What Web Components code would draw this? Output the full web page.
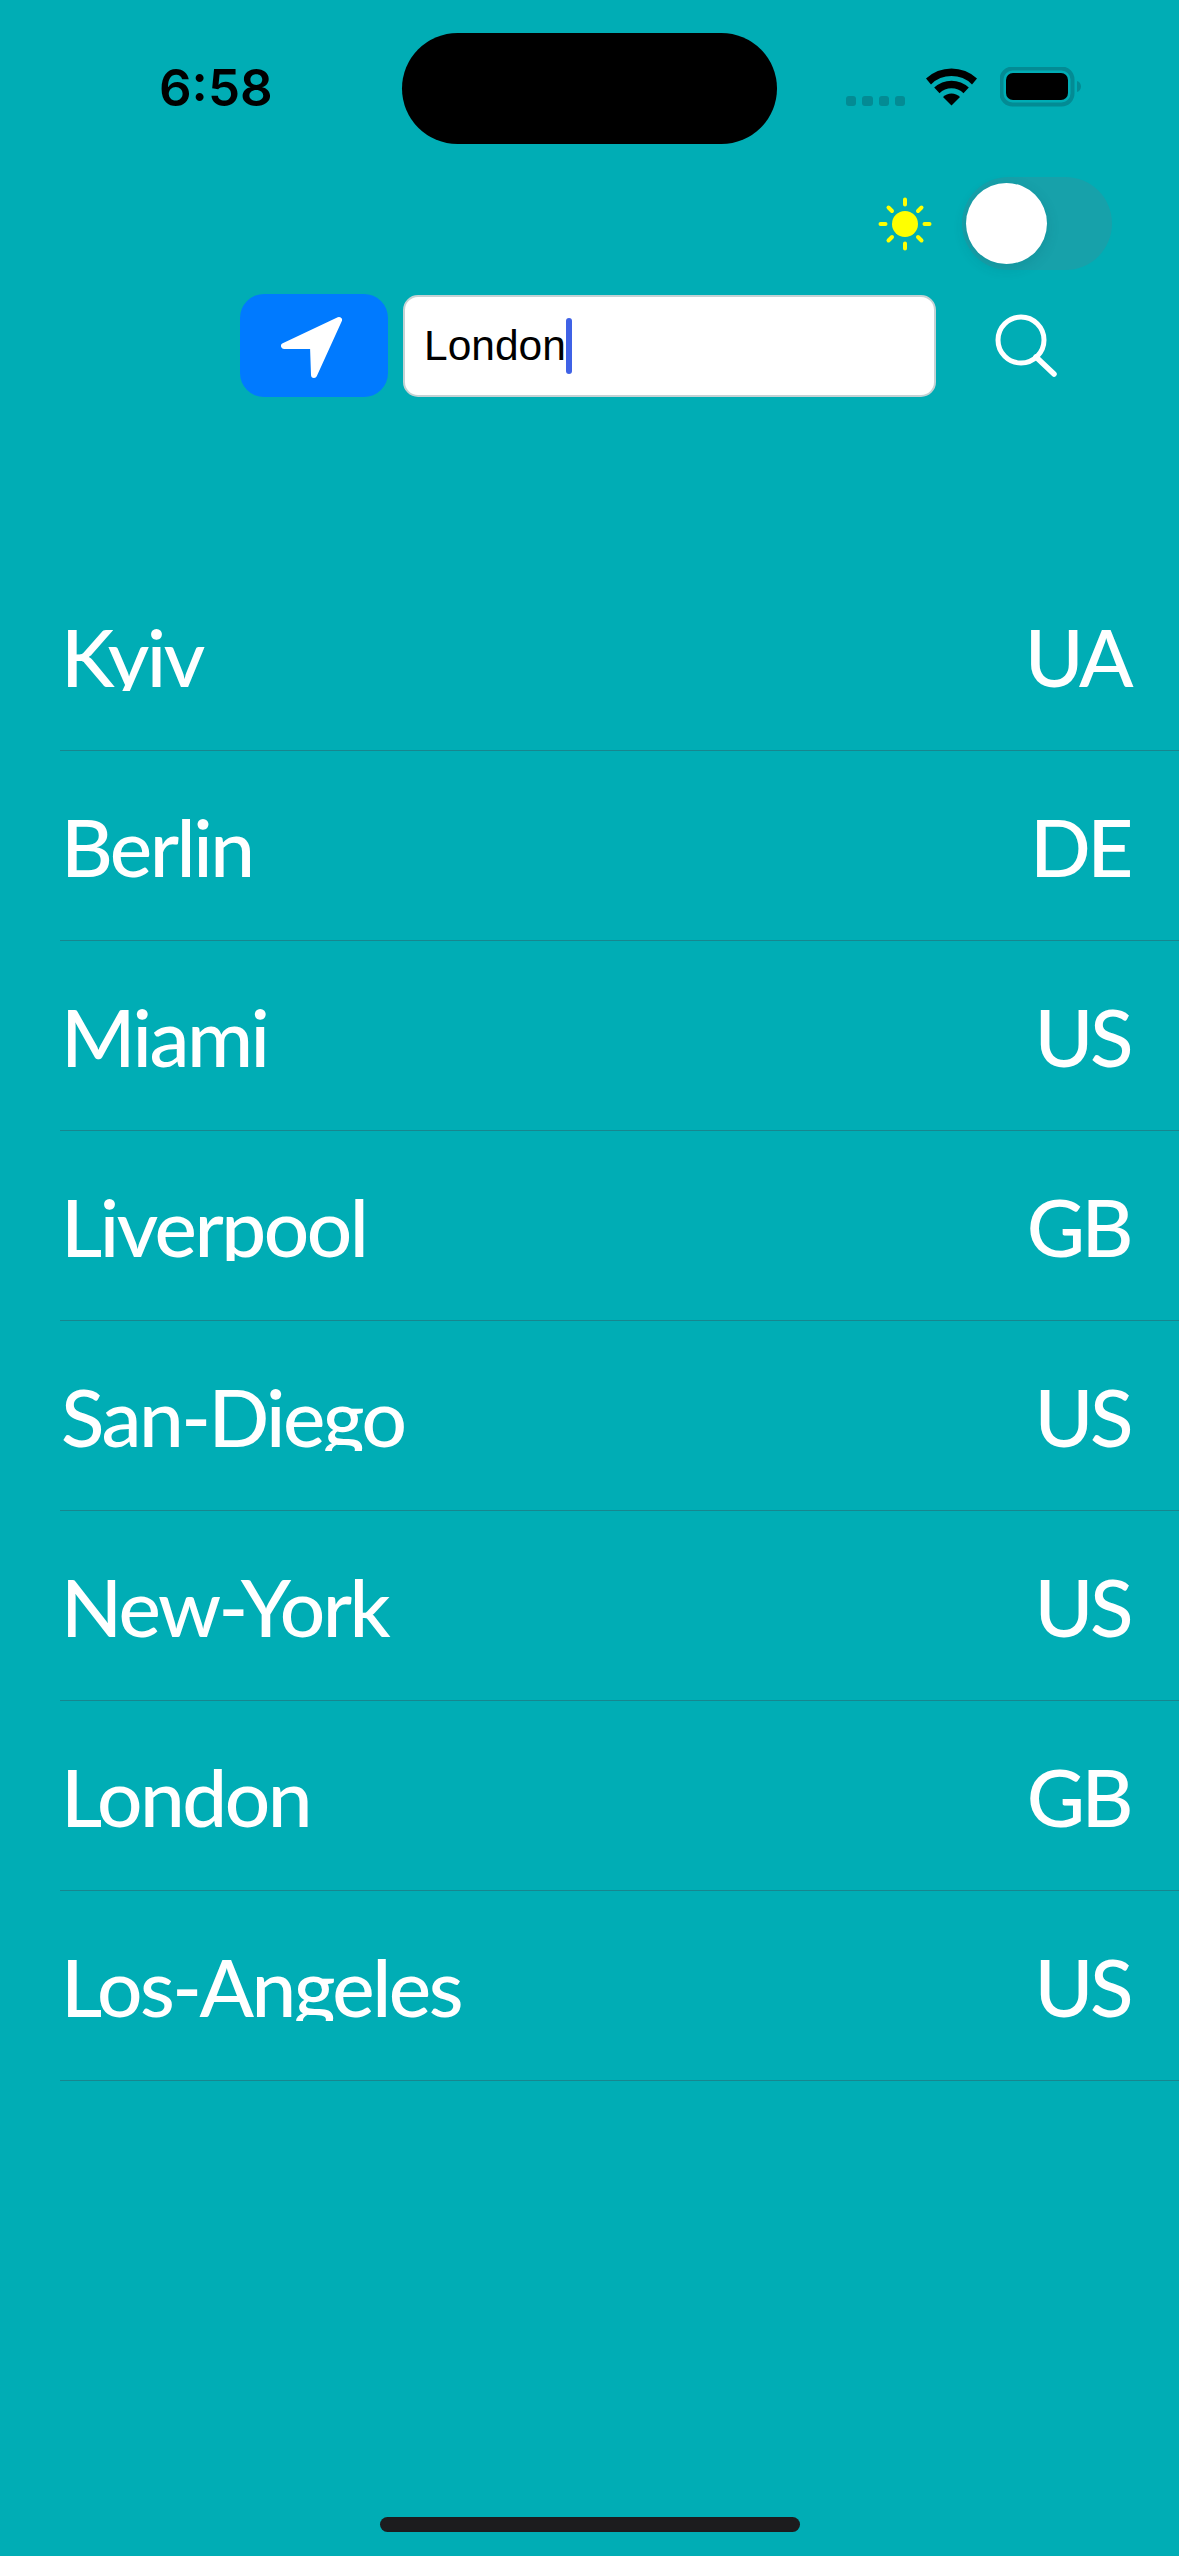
<!DOCTYPE html>
<html lang="en">
<head>
<meta charset="utf-8">
<title>Weather</title>
<style>
  html, body { margin: 0; background: #00adb5; }
  body { width: 1179px; height: 2556px; overflow: hidden; font-family: "Lato", sans-serif; }
</style>
</head>
<body>
<weather-screen>
  <status-bar time="6:58"></status-bar>
  <theme-toggle></theme-toggle>
  <search-bar value="London"></search-bar>
  <city-list>
    <city-row code="UA">Kyiv</city-row>
    <city-row code="DE">Berlin</city-row>
    <city-row code="US">Miami</city-row>
    <city-row code="GB">Liverpool</city-row>
    <city-row code="US">San-Diego</city-row>
    <city-row code="US">New-York</city-row>
    <city-row code="GB">London</city-row>
    <city-row code="US">Los-Angeles</city-row>
  </city-list>
  <home-indicator></home-indicator>
</weather-screen>

<script>
class WeatherScreen extends HTMLElement {
  constructor () {
    super()
    this.attachShadow({ mode: 'open' }).innerHTML = /*html*/`
    <style>
      :host {
        background: #00adb5;
        display: flex;
        flex-direction: column;
        height: 2556px;
        width: 1179px;
      }
    </style>
    <slot></slot>
    `
  }
}

class StatusBar extends HTMLElement {
  constructor () {
    super()
    this.attachShadow({ mode: 'open' })
  }

  connectedCallback () {
    this.shadowRoot.innerHTML = /*html*/`
    <style>
      :host {
        align-items: flex-start;
        box-sizing: border-box;
        display: flex;
        height: 144px;
        padding-top: 33px;
      }
      .time {
        color: #000;
        font: 600 51px/38px "Inter", sans-serif;
        margin: 36px 0 0 159px;
        width: 243px;
      }
      .island {
        background: #000;
        border-radius: 56px;
        height: 111px;
        width: 375px;
      }
      .icons {
        align-items: flex-start;
        display: flex;
        margin-left: 69px;
        margin-top: 35px;
      }
      .dots {
        display: flex;
        gap: 6px;
        margin-top: 28px;
        width: 59px;
      }
      .dots span {
        background: #038b94;
        border-radius: 3px;
        height: 10px;
        width: 10.25px;
      }
      .wifi { margin-left: 21px; }
      .battery { margin-left: 23px; margin-top: -1px; }
    </style>
    <div class="time">${this.getAttribute('time')}</div>
    <div class="island"></div>
    <div class="icons">
      <div class="dots"><span></span><span></span><span></span><span></span></div>
      <svg class="wifi" width="51" height="38" viewBox="0 0 51 38">
        <path fill="#000" d="M25.5 37.5 17 29a12 12 0 0 1 17 0Z"/>
        <path fill="#000" d="M13.5 25.2 8.2 19.6a25 25 0 0 1 34.6 0l-5.3 5.6a17 17 0 0 0-24 0Z"/>
        <path fill="#000" d="M5 16.4 0 10.6a37 37 0 0 1 51 0l-5 5.8a29 29 0 0 0-41 0Z"/>
      </svg>
      <svg class="battery" width="82" height="40" viewBox="0 0 82 40">
        <rect x="1.5" y="1.5" width="71" height="36" rx="11" fill="none" stroke="#038b94" stroke-width="4"/>
        <rect x="6" y="6" width="62" height="27" rx="7" fill="#000"/>
        <path fill="#038b94" d="M77 14c2.500.500 4 3 4 5.500S79.500 24.500 77 25Z"/>
      </svg>
    </div>
    `
  }
}

class ThemeToggle extends HTMLElement {
  constructor () {
    super()
    this.attachShadow({ mode: 'open' }).innerHTML = /*html*/`
    <style>
      :host {
        align-items: center;
        display: flex;
        gap: 30px;
        justify-content: flex-end;
        margin-top: 33px;
        padding-right: 67px;
      }
      .track {
        background: #17a1aa;
        border-radius: 47px;
        display: flex;
        height: 93px;
        padding: 6px 4px;
        box-sizing: border-box;
        width: 150px;
      }
      .thumb {
        background: #fff;
        border-radius: 50%;
        box-shadow: 0 4px 14px rgba(0, 60, 70, .14);
        height: 81px;
        width: 81px;
      }
    </style>
    <svg width="54" height="54" viewBox="0 0 54 54">
      <circle cx="27" cy="27" r="13" fill="#ffff00"/>
      <g stroke="#ffff00" stroke-width="4" stroke-linecap="round">
        <path d="M27 2.500v5M27 46.500v5M2.500 27h5M46.500 27h5"/>
        <path d="M10.500 10.500l3.500 3.500M40 40l3.500 3.500M10.500 43.500l3.500-3.500M40 14l3.500-3.500"/>
      </g>
    </svg>
    <div class="track"><div class="thumb"></div></div>
    `
  }
}

class SearchBar extends HTMLElement {
  constructor () {
    super()
    this.attachShadow({ mode: 'open' })
  }

  connectedCallback () {
    this.shadowRoot.innerHTML = /*html*/`
    <style>
      :host {
        align-items: center;
        display: flex;
        margin-top: 24px;
        padding-left: 240px;
      }
      .locate {
        align-items: center;
        background: #007aff;
        border-radius: 24px;
        display: flex;
        height: 103px;
        justify-content: center;
        width: 148px;
      }
      .field {
        align-items: center;
        background: #fff;
        border: 2px solid #c4d2d4;
        border-radius: 15px;
        box-sizing: border-box;
        color: #000;
        display: flex;
        font: 42.500px "Liberation Sans", sans-serif;
        height: 102px;
        margin-left: 15px;
        padding-left: 19px;
        width: 533px;
      }
      .caret {
        background: #3f62e6;
        border-radius: 3px;
        height: 56px;
        width: 6px;
      }
      .search { margin-left: 58px; }
    </style>
    <div class="locate">
      <svg width="66" height="66" viewBox="0 0 66 66">
        <path fill="#fff" stroke="#fff" stroke-width="6" stroke-linejoin="round" d="M58 7 3 33h29l1 29Z"/>
      </svg>
    </div>
    <div class="field"><span>${this.getAttribute('value')}</span><span class="caret"></span></div>
    <svg class="search" width="66" height="66" viewBox="0 0 66 66">
      <circle cx="27" cy="27" r="23" fill="none" stroke="#fff" stroke-width="5"/>
      <path d="M42 44 60 61" fill="none" stroke="#fff" stroke-width="5.500" stroke-linecap="round"/>
    </svg>
    `
  }
}

class CityList extends HTMLElement {
  constructor () {
    super()
    this.attachShadow({ mode: 'open' }).innerHTML = /*html*/`
    <style>
      :host {
        display: flex;
        flex-direction: column;
        margin-top: 164px;
        padding-left: 60px;
      }
    </style>
    <slot></slot>
    `
  }
}

class CityRow extends HTMLElement {
  constructor () {
    super()
    this.attachShadow({ mode: 'open' })
  }

  connectedCallback () {
    this.shadowRoot.innerHTML = /*html*/`
    <style>
      :host {
        align-items: flex-start;
        border-bottom: 1px solid #17868f;
        box-sizing: border-box;
        color: #fff;
        display: flex;
        font: 500 80px/90px "Lato", sans-serif;
        height: 190px;
        justify-content: space-between;
        letter-spacing: -2.500px;
        padding: 50px 49px 0 1px;
      }
      /* the reference cuts the descenders just under the baseline */
      .name { clip-path: inset(0 -20px 10px -20px); }
      .code { letter-spacing: -3.500px; }
    </style>
    <div class="name"><slot></slot></div>
    <div class="code">${this.getAttribute('code')}</div>
    `
  }
}

class HomeIndicator extends HTMLElement {
  constructor () {
    super()
    this.attachShadow({ mode: 'open' }).innerHTML = /*html*/`
    <style>
      :host {
        display: flex;
        justify-content: center;
        margin-top: auto;
        padding-bottom: 24px;
      }
      div {
        background: #1c1c1e;
        border-radius: 8px;
        height: 15px;
        width: 420px;
      }
    </style>
    <div></div>
    `
  }
}

customElements.define('weather-screen', WeatherScreen)
customElements.define('status-bar', StatusBar)
customElements.define('theme-toggle', ThemeToggle)
customElements.define('search-bar', SearchBar)
customElements.define('city-list', CityList)
customElements.define('city-row', CityRow)
customElements.define('home-indicator', HomeIndicator)
</script>
</body>
</html>
